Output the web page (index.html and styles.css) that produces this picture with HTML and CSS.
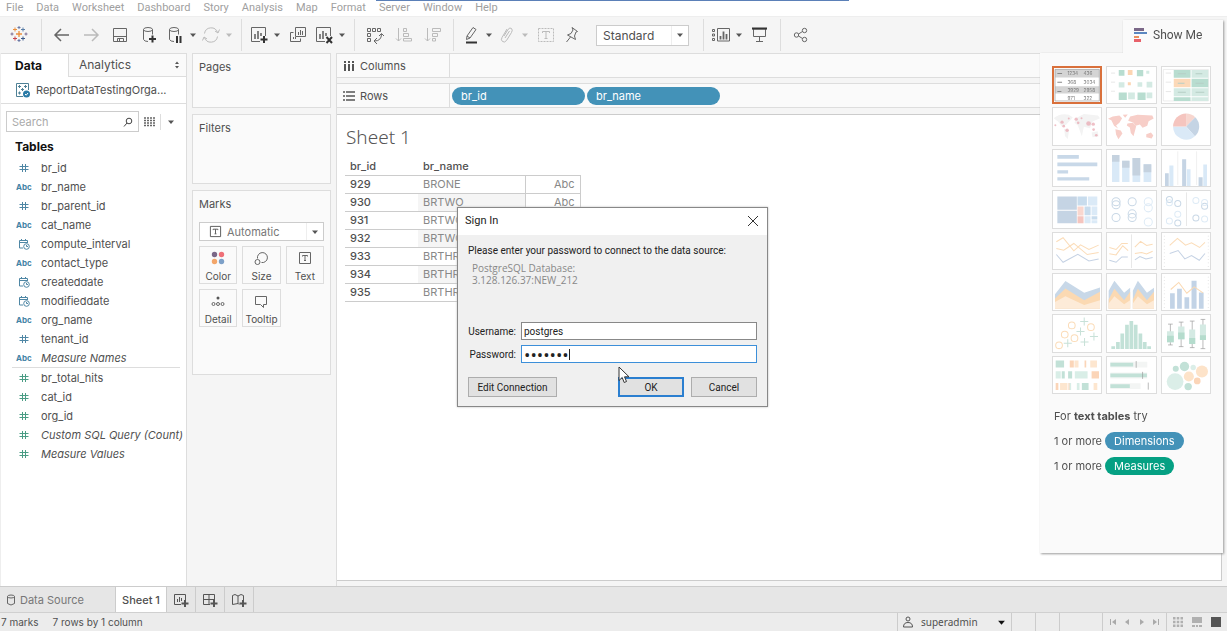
FILE: index.html
```
<!DOCTYPE html>
<html lang="en">

<head>
    <meta charset="utf-8">
    <title>Tableau - Sheet 1</title>
    <link rel="stylesheet" href="styles.css">
</head>

<body>
    <!-- shared icons -->
    <svg class="sprite" aria-hidden="true">
        <symbol id="hash" viewBox="0 0 12 12"><path d="M4.5 2v8M7.5 2v8M1.5 4.5h9M1.5 7.5h9" fill="none" stroke="currentColor" /></symbol>
        <symbol id="date" viewBox="0 0 12 12"><path d="M5 10H1.500V2.500h8V5M1.500 4.500h8M3.500 1v1.500M7.500 1v1.500M8.500 7v1.500h1.500" fill="none" stroke="currentColor" /><circle cx="8.500" cy="8.500" r="2.800" fill="none" stroke="currentColor" /></symbol>
        <symbol id="caret" viewBox="0 0 8 8"><path d="M1 2.500h6L4 6z" fill="currentColor" /></symbol>
        <symbol id="textmark" viewBox="0 0 14 14"><path d="M1.500 1.500h11v11h-11zM4.500 5.500v-1h5v1M7 4.500v5M6 9.500h2" fill="none" stroke="currentColor" /></symbol>
    </svg>

    <div class="app">
        <div class="capture-bar"></div>
        <nav class="menu">
            <a href="#">File</a>
            <a href="#">Data</a>
            <a href="#">Worksheet</a>
            <a href="#">Dashboard</a>
            <a href="#">Story</a>
            <a href="#">Analysis</a>
            <a href="#">Map</a>
            <a href="#">Format</a>
            <a href="#">Server</a>
            <a href="#">Window</a>
            <a href="#">Help</a>
        </nav>

        <div class="toolbar">
            <div class="logo">
                <svg viewBox="0 0 18 18" width="18" height="18" fill="none">
                    <path d="M9 6v6M6 9h6" stroke="#eb8f3c" stroke-width="1.300" />
                    <path d="M5 2.500v4M3 4.500h4" stroke="#eb8f3c" />
                    <path d="M13 2.500v4M11 4.500h4" stroke="#5b7fa8" />
                    <path d="M5 11.500v4M3 13.500h4" stroke="#c8434d" />
                    <path d="M13 11.500v4M11 13.500h4" stroke="#3c5a8a" />
                    <path d="M9 1v3M7.500 2.500h3M9 14v3M7.500 15.500h3" stroke="#6b79a5" />
                    <path d="M2 7.500v3M.5 9h3M16 7.500v3M14.500 9h3" stroke="#7c6d93" />
                </svg>
            </div>
            <div class="tools">
                <button class="tool" aria-label="Back"><svg viewBox="0 0 20 20"><path d="M17 10H3M9 4l-6 6 6 6" stroke-width="1.500" /></svg></button>
                <button class="tool off" aria-label="Forward"><svg viewBox="0 0 20 20"><path d="M3 10h14M11 4l6 6-6 6" stroke-width="1.500" /></svg></button>
                <button class="tool" aria-label="Save"><svg viewBox="0 0 20 20"><path d="M3.500 3.500h13v13h-13zM3.500 11.500h13M7.500 16.500v-3h6v3M9.500 14v2" /></svg></button>
                <button class="tool" aria-label="New data source"><svg viewBox="0 0 20 20"><ellipse cx="9" cy="4.500" rx="4.500" ry="2" /><path d="M4.500 4.500v10q1 2 4.500 2M13.500 4.500v5" /><path d="M13.500 10.500v7M10 14h7" class="heavy" /></svg></button>
                <div class="split">
                    <button class="tool" aria-label="Pause updates"><svg viewBox="0 0 20 20"><ellipse cx="9" cy="4.500" rx="4.500" ry="2" /><path d="M4.500 4.500v10q1 2 4.500 2M13.500 4.500v5" /><path d="M12 11v7M15.500 11v7" class="heavy" /></svg></button>
                    <button class="drop" aria-label="Pause options"><svg><use href="#caret" /></svg></button>
                </div>
                <div class="split off">
                    <button class="tool" aria-label="Refresh"><svg viewBox="0 0 20 20"><path d="M3.500 8.500a6.700 6.700 0 0 1 13-1M16.500 11.500a6.700 6.700 0 0 1-13 1M14 6l3 2 1.500-3.500M6 14l-3-2-1.500 3.500" /></svg></button>
                    <button class="drop" aria-label="Refresh options"><svg><use href="#caret" /></svg></button>
                </div>
            </div>
            <div class="tools">
                <div class="split">
                    <button class="tool" aria-label="New worksheet"><svg viewBox="0 0 20 20"><path d="M11 16.500H2.500v-14h14V11" /><path d="M6 9v5M9 6v8M12 8v3" stroke-width="1.600" /><path d="M15 11v7M11.500 14.500h7" class="heavy" /></svg></button>
                    <button class="drop" aria-label="New options"><svg><use href="#caret" /></svg></button>
                </div>
                <button class="tool" aria-label="Duplicate"><svg viewBox="0 0 20 20"><path d="M7.500 2.500h10v9h-10zM5.500 7.500h-3v9h10v-3M10.500 7v3M12.500 5v5M14.500 6v4M5.500 12v2M7.500 12v2" /></svg></button>
                <div class="split">
                    <button class="tool" aria-label="Clear sheet"><svg viewBox="0 0 20 20"><path d="M11 16.500H2.500v-14h14V11" /><path d="M6 9v5M9 6v8M12 8v3" stroke-width="1.600" /><path d="M12.500 12l5.500 6M18 12l-5.500 6" class="heavy" /></svg></button>
                    <button class="drop" aria-label="Clear options"><svg><use href="#caret" /></svg></button>
                </div>
            </div>
            <div class="tools">
                <button class="tool" aria-label="Swap rows and columns"><svg viewBox="0 0 20 20"><path d="M2.500 3.500h3v3h-3zM7.500 3.500h3v3h-3zM12.500 3.500h3v3h-3zM2.500 8.500h3v3h-3zM2.500 13.500h3v3h-3zM16.500 9q0 7-7 7M14 11l2.500-2.500L19 11M12 13l-3 3 3 3" /></svg></button>
                <button class="tool off" aria-label="Sort ascending"><svg viewBox="0 0 20 20"><path d="M4.500 3v13M2 13.500L4.500 16 7 13.500M9.500 3.500h3v3h-3zM9.500 8.500h5v3h-5zM9.500 13.500h8v2.500h-8z" /></svg></button>
                <button class="tool off" aria-label="Sort descending"><svg viewBox="0 0 20 20"><path d="M4.500 3v13M2 13.500L4.500 16 7 13.500M9.500 3.500h8v3h-8zM9.500 8.500h5v3h-5zM9.500 13.500h3v2.500h-3z" /></svg></button>
            </div>
            <div class="tools">
                <div class="split">
                    <button class="tool" aria-label="Highlight"><svg viewBox="0 0 20 20"><path d="M6 11l6-8.500 3 2L9 13l-3.500 1.500zM6 11l3 2" /><path d="M5 17.500h11" class="heavy" /></svg></button>
                    <button class="drop" aria-label="Highlight options"><svg><use href="#caret" /></svg></button>
                </div>
                <div class="split off">
                    <button class="tool" aria-label="Group members"><svg viewBox="0 0 20 20"><path d="M7 11l4-6.500q2-2.500 3.500-1t0 4l-5 8q-2 2.500-4 1t-.5-4l5-8.500M8 13l4.500-7" /></svg></button>
                    <button class="drop" aria-label="Group options"><svg><use href="#caret" /></svg></button>
                </div>
                <button class="tool off" aria-label="Show mark labels"><svg viewBox="0 0 20 20"><path d="M2.500 3.500h15v13h-15z" stroke-dasharray="2 1" /><path d="M6.500 8V6.500h7V8M10 6.500v7M8.500 13.500h3" /></svg></button>
                <button class="tool pin" aria-label="Fix axes"><svg viewBox="0 0 20 20"><path d="M10 2.500l5.500 4-1.500.5-1.500 4 1 3.500-8-4.500 3.500-1.500 2-3.500zM8.500 12L4.500 17" /></svg></button>
                <label class="picker fit">
                    <select aria-label="Fit">
                        <option>Standard</option>
                    </select>
                    <svg><use href="#caret" /></svg>
                </label>
            </div>
            <div class="tools">
                <div class="split">
                    <button class="tool" aria-label="Show cards"><svg viewBox="0 0 20 20"><path d="M1.500 4.500h2v2h-2zM1.500 9h2v2h-2zM1.500 13.500h2v2h-2zM6.500 3.500h12v12.500h-12z" /><path d="M9.500 11v3.500M12.500 6.500v8M15.500 9v5.500" stroke-width="1.800" /></svg></button>
                    <button class="drop" aria-label="Card options"><svg><use href="#caret" /></svg></button>
                </div>
                <button class="tool" aria-label="Presentation mode"><svg viewBox="0 0 20 20"><path d="M2.500 4h14M3.500 4v7.500h12V4M9.500 11.500v5M6 16.500h7" /><path d="M2 3.500h15" class="heavy" /></svg></button>
            </div>
            <div class="tools">
                <button class="tool" aria-label="Share"><svg viewBox="0 0 20 20"><circle cx="5.500" cy="10" r="2.200" /><circle cx="13.500" cy="5.500" r="2.200" /><circle cx="13.500" cy="14.500" r="2.200" /><path d="M7.500 9l4-2.500M7.500 11l4 2.500" /></svg></button>
            </div>
        </div>

        <main class="workspace">
            <aside class="data-pane">
                <div class="pane-tabs">
                    <button class="pane-tab active">Data</button>
                    <button class="pane-tab">Analytics
                        <svg viewBox="0 0 6 8" width="6" height="8"><path d="M1 3l2-2.500L5 3zM1 5l2 2.500L5 5z" fill="#555" /></svg>
                    </button>
                </div>
                <div class="source">
                    <svg viewBox="0 0 16 16" width="16" height="16" fill="none" stroke="#4f8196">
                        <path d="M8 14.500H1.500v-13h12V8M4.500 3v3M3 4.500h3M10.500 3v3M9 4.500h3M7.500 6v3M6 7.500h3M4.500 9.500v3M3 11h3" />
                        <circle cx="11.500" cy="12" r="3.500" fill="#2a7ba7" stroke="none" />
                        <path d="M10 12l1.200 1.200L13 11" stroke="#fff" />
                    </svg>
                    <span>ReportDataTestingOrga...</span>
                </div>
                <div class="search-row">
                    <label class="search">
                        <input type="text" placeholder="Search" aria-label="Search fields">
                        <svg viewBox="0 0 10 10" width="10" height="10" fill="none" stroke="#444"><circle cx="6" cy="4" r="2.800" /><path d="M4 6L1 9.500" /></svg>
                    </label>
                    <button class="view" aria-label="View data">
                        <svg viewBox="0 0 11 10" width="11" height="10"><path d="M0 1h11M0 3.500h11M0 6h11M0 8.500h11" stroke="#666" stroke-width="1.500" stroke-dasharray="2 1" /></svg>
                    </button>
                    <button class="drop bordered" aria-label="Data pane menu"><svg><use href="#caret" /></svg></button>
                </div>
                <h2>Tables</h2>
                <ul class="fields">
                    <li><svg><use href="#hash" /></svg>br_id</li>
                    <li><b>Abc</b>br_name</li>
                    <li><svg><use href="#hash" /></svg>br_parent_id</li>
                    <li><b>Abc</b>cat_name</li>
                    <li><svg><use href="#date" /></svg>compute_interval</li>
                    <li><b>Abc</b>contact_type</li>
                    <li><svg><use href="#date" /></svg>createddate</li>
                    <li><svg><use href="#date" /></svg>modifieddate</li>
                    <li><b>Abc</b>org_name</li>
                    <li><svg><use href="#hash" /></svg>tenant_id</li>
                    <li><b>Abc</b><i>Measure Names</i></li>
                </ul>
                <ul class="fields measures">
                    <li><svg><use href="#hash" /></svg>br_total_hits</li>
                    <li><svg><use href="#hash" /></svg>cat_id</li>
                    <li><svg><use href="#hash" /></svg>org_id</li>
                    <li><svg><use href="#hash" /></svg><i>Custom SQL Query (Count)</i></li>
                    <li><svg><use href="#hash" /></svg><i>Measure Values</i></li>
                </ul>
            </aside>

            <div class="cards">
                <section class="card pages">
                    <h3>Pages</h3>
                </section>
                <section class="card filters">
                    <h3>Filters</h3>
                </section>
                <section class="card marks">
                    <h3>Marks</h3>
                    <label class="picker mark-type">
                        <svg class="lead"><use href="#textmark" /></svg>
                        <select aria-label="Mark type">
                            <option>Automatic</option>
                        </select>
                        <svg><use href="#caret" /></svg>
                    </label>
                    <div class="mark-grid">
                        <button><svg viewBox="0 0 16 16"><g stroke="none"><circle cx="4.500" cy="4.500" r="2.700" fill="#7b6888" /><circle cx="11.500" cy="4.500" r="2.700" fill="#ef7078" /><circle cx="4.500" cy="11.500" r="2.700" fill="#f3a66a" /><circle cx="11.500" cy="11.500" r="2.700" fill="#7da0c8" /></g></svg>Color</button>
                        <button><svg viewBox="0 0 16 16"><path d="M4.500 8.500a5 5 0 1 1 4 4" /><circle cx="4.500" cy="12" r="2.500" /></svg>Size</button>
                        <button><svg viewBox="0 0 16 16"><path d="M2.500 2.500h11v11h-11zM5.500 6.500v-1h5v1M8 5.500v5M7 10.500h2" /></svg>Text</button>
                        <button><svg viewBox="0 0 16 16"><circle cx="8" cy="5" r="1.500" fill="#555" stroke="none" /><circle cx="3.500" cy="11" r="1.500" /><circle cx="8" cy="11" r="1.500" /><circle cx="12.500" cy="11" r="1.500" /></svg>Detail</button>
                        <button><svg viewBox="0 0 16 16"><path d="M2.500 3.500h11v8h-3v3l-3-3h-5z" /></svg>Tooltip</button>
                    </div>
                </section>
            </div>

            <div class="sheet-area">
                <div class="shelf">
                    <h3><svg viewBox="0 0 12 12"><path d="M2 1v2M2 4v7M6 1v2M6 4v7M10 1v2M10 4v7" stroke="#555" stroke-width="2" /></svg>Columns</h3>
                </div>
                <div class="shelf rows">
                    <h3><svg viewBox="0 0 12 12"><path d="M0 2h2M3 2h9M0 6h2M3 6h9M0 10h2M3 10h9" stroke="#555" stroke-width="1.600" /></svg>Rows</h3>
                    <button class="pill">br_id</button>
                    <button class="pill">br_name</button>
                </div>
                <section class="canvas">
                    <h1>Sheet 1</h1>
                    <table>
                        <thead>
                            <tr><th>br_id</th><th>br_name</th><th></th></tr>
                        </thead>
                        <tbody>
                            <tr><th>929</th><td>BRONE</td><td>Abc</td></tr>
                            <tr><th>930</th><td>BRTWO</td><td>Abc</td></tr>
                            <tr><th>931</th><td>BRTWO</td><td></td></tr>
                            <tr><th>932</th><td>BRTWO</td><td></td></tr>
                            <tr><th>933</th><td>BRTHR</td><td></td></tr>
                            <tr><th>934</th><td>BRTHR</td><td></td></tr>
                            <tr><th>935</th><td>BRTHR</td><td></td></tr>
                        </tbody>
                    </table>
                </section>
            </div>
        </main>

        <div class="sheet-tabs">
            <button class="sheet-tab source-tab">
                <svg viewBox="0 0 10 12" width="10" height="12" fill="none" stroke="#666"><ellipse cx="5" cy="2.500" rx="3.500" ry="1.500" /><path d="M1.500 2.500v7q3.500 3 7 0v-7" /></svg>
                Data Source
            </button>
            <button class="sheet-tab current">Sheet 1</button>
            <button class="sheet-tab add" aria-label="New worksheet tab"><svg viewBox="0 0 16 16"><path d="M8 12.500H1.500v-10h11V8M4.500 7v3M6.500 5v5M8.500 6v3" /><path d="M12 8v7M8.500 11.500h7" stroke-width="2" /></svg></button>
            <button class="sheet-tab add" aria-label="New dashboard"><svg viewBox="0 0 16 16"><path d="M8 12.500H1.500v-10h11V8M7 2.500v10M1.500 7.500h11" /><path d="M12 8v7M8.500 11.500h7" stroke-width="2" /></svg></button>
            <button class="sheet-tab add" aria-label="New story"><svg viewBox="0 0 16 16"><path d="M8 12.500l-1-1-5.500 1v-9L4 2.500l3 1.500 3-1.500 2.500 1V8M7 4v8" /><path d="M12 8v7M8.500 11.500h7" stroke-width="2" /></svg></button>
        </div>

        <footer class="status">
            <span>7 marks</span>
            <span class="summary">7 rows by 1 column</span>
            <button class="user">
                <svg viewBox="0 0 12 12" width="12" height="12" fill="none" stroke="#555"><circle cx="6" cy="3" r="2" /><path d="M1.500 11q0-4.500 4.500-4.500T10.500 11z" /></svg>
                <span>superadmin</span>
                <svg class="arrow"><use href="#caret" /></svg>
            </button>
            <div class="slot"></div>
            <div class="slot"></div>
            <div class="slot wide"></div>
            <div class="pager">
                <button aria-label="First"><svg viewBox="0 0 8 8"><path d="M1 1h1v6H1zM7 1v6L3 4z" /></svg></button>
                <button aria-label="Previous"><svg viewBox="0 0 8 8"><path d="M6 1v6L2 4z" /></svg></button>
                <button aria-label="Next"><svg viewBox="0 0 8 8"><path d="M2 1v6l4-3z" /></svg></button>
                <button aria-label="Last"><svg viewBox="0 0 8 8"><path d="M6 1h1v6H6zM1 1v6l4-3z" /></svg></button>
            </div>
            <div class="views">
                <button aria-label="Sheet sorter"><svg viewBox="0 0 10 10"><path d="M0 0h2.500v2.500H0zM3.750 0h2.500v2.500h-2.500zM7.500 0H10v2.500H7.500zM0 3.750h2.500v2.500H0zM3.750 3.750h2.500v2.500h-2.500zM7.500 3.750H10v2.500H7.500zM0 7.500h2.500V10H0zM3.750 7.500h2.500V10h-2.500zM7.500 7.500H10V10H7.500z" /></svg></button>
                <button aria-label="Filmstrip"><svg viewBox="0 0 10 10"><path d="M0 0h10v6H0zM0 8h3v2H0zM4 8h2v2H4zM7 8h3v2H7z" /></svg></button>
                <button class="on" aria-label="Tabs"><svg viewBox="0 0 10 10"><path d="M0 0h10v10H0z" /></svg></button>
            </div>
        </footer>

        <!-- chart picker, floats over the canvas -->
        <aside class="show-me">
            <button class="show-tab">
                <svg viewBox="0 0 13 14" width="13" height="14"><path d="M0 0h10v3H0z" fill="#7b6888" /><path d="M0 4h13v2H0z" fill="#5b87c0" /><path d="M0 8h5v2H0z" fill="#eb8f5c" /><path d="M0 11h7v3H0z" fill="#e8616a" /></svg>
                Show Me
            </button>
            <div class="show-body">
                <div class="charts">
                    <button class="chosen" aria-label="Text table"><svg viewBox="3 3 144 106"><path d="M9 9h132v24H9zM9 59h132v22H9z" fill="#d4d4d4" /><path d="M9 9h132v94H9z" fill="none" stroke="#999" stroke-width="2" /><path d="M16 21h14M16 47h14M16 75h12" stroke="#888" stroke-width="3" /><g class="tiny"><text x="46" y="26">1234</text><text x="94" y="26">436</text><text x="46" y="52">368</text><text x="94" y="52">3034</text><text x="46" y="77">3929</text><text x="94" y="77">2958</text><text x="46" y="99">971</text><text x="94" y="99">322</text></g></svg></button>
                    <button aria-label="Heat map"><svg viewBox="3 3 144 106"><path d="M15 20h12M15 47h12M15 74h12" stroke="#ddd" stroke-width="2" /><path d="M38 11h17v17H38zM92 11h19v18H92zM38 78h24v22H38zM94 78h24v22H94z" fill="#b8ddd0" /><path d="M120 13h9v9h-9zM38 47h17v16H38zM94 47h14v14H94zM121 46h17v17h-17zM66 78h20v20H66zM121 78h17v17h-17z" fill="#d4eae3" /><path d="M65 11h14v15H65zM65 47h9v9h-9z" fill="#fcd5b2" /></svg></button>
                    <button aria-label="Highlight table"><svg viewBox="3 3 144 106"><path d="M7 9h134v94H7z" fill="none" stroke="#e3e3e3" stroke-width="2" /><path d="M14 20h16M14 47h16M14 75h16" stroke="#ddd" stroke-width="2" /><path d="M38 11h50v23H38zM91 37h50v25H91zM38 92h50v11H38z" fill="#b8ddd0" /><path d="M91 11h50v23H91zM38 65h50v24H38zM91 65h50v24H91zM91 92h50v11H91z" fill="#d4eae3" /><path d="M38 37h50v25H38z" fill="#fcd9b8" /><path d="M50 22h24M103 22h20M50 50h20M103 50h24M50 77h24M103 77h26" stroke="#b5cec5" stroke-width="3" /></svg></button>

                    <button aria-label="Symbol map"><svg viewBox="3 3 144 106"><path d="M5 32q20-16 45-10l12 8-20 22-12 6-12-16zM36 64l15 4-4 26-8-8zM75 30l20-10 42 4 6 8-22 10-8 20-18-4-6 28-12-32-10-8zM118 75l18-4 3 16-18 2z" fill="#f3f3f3" /><g fill="#e9a6b0" opacity=".7"><circle cx="10" cy="53" r="3" /><circle cx="30" cy="44" r="5" /><circle cx="35" cy="56" r="4" /><circle cx="45" cy="68" r="5" /><circle cx="50" cy="33" r="3" /><circle cx="72" cy="35" r="5" /><circle cx="78" cy="46" r="4" /><circle cx="88" cy="32" r="3" /><circle cx="109" cy="48" r="7" /><circle cx="123" cy="50" r="5" /><circle cx="124" cy="66" r="4" /><circle cx="132" cy="83" r="4" /></g></svg></button>
                    <button aria-label="Filled map"><svg viewBox="3 3 144 106"><path d="M6 34l14-7 20-3 8 8-8 14-10 8 6 9-12-8-8-17zM28 65l16 4 5 9-12 17-7-14zM50 22l15-1-8 10zM64 48l16-2 10 10-8 30-8-10-3-16-9-6zM66 40l6-13 22-5 44 2 4 9-15 8-4 14-14 6-8-10-12 4-8-10zM120 80l14-5 7 9-5 9-16-4z" fill="#f7cec8" /></svg></button>
                    <button aria-label="Pie chart"><svg viewBox="3 3 144 106"><path d="M75 57V18a39 39 0 0 1 27 11z" fill="#f7d6cf" /><path d="M75 57l27-28a39 39 0 0 1-1 57z" fill="#c5d4e4" /><path d="M75 57l26 29a39 39 0 0 1-65-29z" fill="#dae9f7" /><path d="M75 57H36a39 39 0 0 1 39-39z" fill="#f5c5bf" /></svg></button>

                    <button aria-label="Horizontal bars"><svg viewBox="3 3 144 106"><path d="M16 17h64v11H16zM16 39h119v11H16zM16 62h32v10H16zM16 83h95v10H16z" fill="#c8d8e8" /></svg></button>
                    <button aria-label="Stacked bars"><svg viewBox="3 3 144 106"><path d="M18 17h22v80H18zM48 34h22v63H48zM79 26h23v71H79zM112 44h23v53h-23z" fill="#d9e9f7" /><path d="M18 17h22v20H18zM48 34h22v21H48zM79 26h23v52H79zM112 44h23v24h-23z" fill="#c5d2df" /></svg></button>
                    <button aria-label="Side-by-side bars"><svg viewBox="3 3 144 106"><path d="M50 6v100M106 6v100" stroke="#e8e8e8" stroke-width="2" /><path d="M12 71h11v38H12zM63 29h12v80H63zM112 83h12v26h-12z" fill="#c5d4e4" /><path d="M25 48h12v61H25zM77 59h11v50H77zM126 45h11v64h-11z" fill="#d9e9f7" /></svg></button>

                    <button aria-label="Treemap"><svg viewBox="3 3 144 106"><path d="M16 18h58v40H16zM16 61h58v37H16z" fill="#c5d4e4" /><path d="M76 18h28v27H76zM97 48h18v26H97zM118 77h17v10h-17z" fill="#c8dced" /><path d="M107 18h28v27h-28zM118 48h17v26h-17zM97 77h18v21H97zM118 89h17v9h-17z" fill="#dbeaf7" /><path d="M76 48h18v27H76z" fill="#f9d7cf" /><path d="M76 77h18v21H76z" fill="#f5c5bf" /></svg></button>
                    <button aria-label="Circle views"><svg viewBox="3 3 144 106" fill="none" stroke="#c9d8e6" stroke-width="3"><circle cx="30" cy="34" r="12" /><circle cx="30" cy="43" r="12" /><circle cx="30" cy="81" r="12" /><circle cx="78" cy="34" r="12" /><circle cx="78" cy="70" r="12" /><circle cx="78" cy="81" r="12" /><g stroke="#deebf6"><circle cx="126" cy="34" r="12" /><circle cx="126" cy="52" r="12" /><circle cx="126" cy="94" r="12" /></g></svg></button>
                    <button aria-label="Side-by-side circles"><svg viewBox="3 3 144 106" fill="none" stroke="#c9d8e6" stroke-width="3"><path d="M76 6v100" stroke="#e8e8e8" /><circle cx="25" cy="27" r="9" /><circle cx="50" cy="39" r="9" /><circle cx="50" cy="97" r="9" /><circle cx="130" cy="47" r="9" /><circle cx="104" cy="82" r="9" /><g stroke="#deebf6"><circle cx="25" cy="37" r="9" /><circle cx="25" cy="91" r="9" /><circle cx="50" cy="71" r="9" /><circle cx="104" cy="30" r="9" /><circle cx="130" cy="36" r="9" /><circle cx="130" cy="85" r="9" /></g></svg></button>

                    <button aria-label="Lines continuous"><svg viewBox="3 3 144 106" fill="none" stroke="#fbdcb8" stroke-width="3"><path d="M13 28l20-12 32 39 20-18 25 14 29-13M13 48l22 5 30-20 40 33 34-6" /><path d="M13 66l20 23 44-24 33 20 29-6" stroke="#c5d2e4" /></svg></button>
                    <button aria-label="Lines discrete"><svg viewBox="3 3 144 106" fill="none" stroke="#fbdcb8" stroke-width="3"><path d="M76 6v100" stroke="#e8e8e8" /><path d="M10 45l20 6 17-18h18M10 64l20 3 20-27 16 14M86 44l17-17 18 12 18-4M86 63l20-3 15 4 18-8" /><path d="M10 83l20 6 17-16h18M86 82l15-10 18 7 20-4" stroke="#c5d2e4" /></svg></button>
                    <button aria-label="Dual lines"><svg viewBox="3 3 144 106" fill="none" stroke="#fbdcb8" stroke-width="3"><path d="M10 10v96M141 10v96" stroke="#ddd" stroke-dasharray="2 8" /><path d="M26 39l23-21 24 20 18-7 24 14 16-15" /><path d="M26 63l25-9 20 25 20-10 23 14 17-20" stroke="#c5d2e4" /></svg></button>

                    <button aria-label="Area continuous"><svg viewBox="3 3 144 106"><path d="M9 62l31-39 56 35 47-16v63H9z" fill="#c8d8e8" /><path d="M9 75l31-30 56 35 47-25v50H9z" fill="#fbd9b2" /><path d="M9 85l31-17 56 26 47-14v25H9z" fill="#fdebd8" /></svg></button>
                    <button aria-label="Area discrete"><svg viewBox="3 3 144 106"><path d="M8 52l17-30 29 36 18-15v62H8zM80 52l15-30 27 36 21-15v62H80z" fill="#c8d8e8" /><path d="M8 78l17-32 29 34 18-25v50H8zM80 78l15-32 27 34 21-25v50H80z" fill="#fbd9b2" /><path d="M8 90l17-22 29 24 18-12v25H8zM80 90l15-22 27 24 21-12v25H80z" fill="#fdebd8" /></svg></button>
                    <button aria-label="Dual combination"><svg viewBox="3 3 144 106"><path d="M10 10v96M141 10v96" stroke="#ddd" stroke-width="3" stroke-dasharray="2 8" /><path d="M27 59h14v46H27zM48 46h14v59H48zM70 71h14v34H70zM91 22h15v83H91zM113 57h14v48h-14z" fill="#c2d3e6" /><path d="M29 48l24-21 24 32 22-19 26 18" fill="none" stroke="#fbd9b2" stroke-width="3" /></svg></button>

                    <button aria-label="Scatter plot"><svg viewBox="3 3 144 106" fill="none" stroke="#fbdcb8" stroke-width="3"><circle cx="59" cy="33" r="10" /><circle cx="116" cy="38" r="10" /><circle cx="38" cy="60" r="10" /><circle cx="67" cy="71" r="10" /><circle cx="21" cy="92" r="10" /><path d="M84 21h24M96 9v24M73 51h24M85 39v24M35 86h24M47 74v24M85 82h24M97 70v24M113 66h24M125 54v24" stroke="#c8e1d8" /></svg></button>
                    <button aria-label="Histogram"><svg viewBox="3 3 144 106"><path d="M16 95h11v8H16zM30 82h11v21H30zM43 57h11v46H43zM57 31h11v72H57zM70 20h11v83H70zM83 31h11v72H83zM97 57h11v46H97zM110 82h11v21h-11zM123 95h11v8h-11z" fill="#c2e1d7" /></svg></button>
                    <button aria-label="Box plot"><svg viewBox="3 3 144 106"><path d="M28 29v62M21 29h14M21 91h14M60 23v73M53 23h14M53 96h14M93 20v79M86 20h14M86 99h14M125 15v87M118 15h14M118 102h14" stroke="#999" stroke-width="2" /><path d="M18 50h20v33H18zM51 36h19v38H51zM84 45h18v43H84zM116 30h18v46h-18z" fill="#d4eae3" /><path d="M18 64h20v19H18zM51 54h19v20H51zM84 70h18v18H84zM116 62h18v14h-18z" fill="#b5dccd" /></svg></button>

                    <button aria-label="Gantt"><svg viewBox="3 3 144 106"><path d="M11 12h25v21H11zM29 44h9v22h-9zM48 44h12v22H48zM89 79h20v21H89z" fill="#c2e1d7" /><path d="M11 44h15v22H11zM68 44h38v22H68zM51 79h6v21h-6zM74 79h8v21h-8z" fill="#d9eee7" /><path d="M53 12h12v21H53zM97 12h5v21h-5zM118 44h22v22h-22zM11 79h8v21h-8zM49 79h3v21h-3z" fill="#fbd5b8" /><path d="M67 12h12v21H67zM114 12h20v21h-20zM24 79h22v21H24zM124 79h11v21h-11z" fill="#fde6cf" /></svg></button>
                    <button aria-label="Bullet graph"><svg viewBox="3 3 144 106"><path d="M13 16h110v17H13zM13 48h110v18H13zM13 80h90v17H13z" fill="#f3f5f4" /><path d="M13 19h68v11H13zM13 51h109v11H13zM13 83h58v11H13z" fill="#c2e1d7" /><path d="M90 14v20M109 46v21M126 78v21" stroke="#999" stroke-width="2" /></svg></button>
                    <button aria-label="Packed bubbles"><svg viewBox="3 3 144 106" fill="#c2e1d7"><circle cx="42" cy="75" r="25" fill="#dbeee8" /><circle cx="70" cy="30" r="14" /><circle cx="44" cy="37" r="9" /><circle cx="81" cy="90" r="11" /><circle cx="96" cy="33" r="8" fill="#dbeee8" /><circle cx="122" cy="45" r="18" fill="#fde3c9" /><circle cx="83" cy="60" r="15" fill="#fde3c9" /><circle cx="108" cy="73" r="10" fill="#fbd5b8" /></svg></button>
                </div>
                <p>For <strong>text tables</strong> try</p>
                <p>1 or more <span class="tag">Dimensions</span></p>
                <p>1 or more <span class="tag green">Measures</span></p>
            </div>
        </aside>

        <form class="dialog" role="dialog" aria-labelledby="dialogTitle">
            <header>
                <h2 id="dialogTitle">Sign In</h2>
                <button type="button" class="close" aria-label="Close"><svg viewBox="0 0 12 12" width="12" height="12"><path d="M1 1l10 10M11 1L1 11" stroke="#333" /></svg></button>
            </header>
            <div class="dialog-body">
                <p>Please enter your password to connect to the data source:</p>
                <p class="server">PostgreSQL Database:<br>3.128.126.37:NEW_212</p>
                <div class="form-row">
                    <label for="username">Username:</label>
                    <input type="text" id="username" value="postgres">
                </div>
                <div class="form-row">
                    <label for="password">Password:</label>
                    <input type="password" id="password" value="1234567">
                </div>
                <div class="actions">
                    <button type="button" class="edit">Edit Connection</button>
                    <button type="submit" class="ok">OK</button>
                    <button type="button">Cancel</button>
                </div>
            </div>
            <svg class="pointer" viewBox="0 0 12 18" width="12" height="18"><path d="M1 1v13.500l3.200-3 2 5 2.300-1-2-4.700H11z" fill="#fff" stroke="#333" /></svg>
        </form>
    </div>
</body>

</html>
```
FILE: styles.css
```
* {
    box-sizing: border-box;
}

body {
    margin: 0;
    font-family: Inter, "Liberation Sans", sans-serif;
    font-size: 11px;
    color: #505050;
    background-color: white;
}

h1, h2, h3, p, ul {
    margin: 0;
    padding: 0;
    font-weight: normal;
}

button, select, input {
    margin: 0;
    padding: 0;
    border: none;
    background: none;
    font: inherit;
    color: inherit;
}

button svg {
    display: block;
}

.sprite {
    display: none;
}

.app {
    position: relative;
    display: flex;
    flex-direction: column;
    min-height: 100vh;
    padding-bottom: 1px;
    overflow: hidden;
}

.capture-bar {
    position: absolute;
    top: 0;
    left: 376px;
    width: 473px;
    height: 1px;
    background-color: #5b80b8;
}

/* menu and toolbar */
.menu {
    display: flex;
    gap: 13px;
    height: 16px;
    padding-left: 6px;
    font-family: Roboto, sans-serif;
    line-height: 15px;
}

.menu a {
    color: #a0a0a0;
    text-decoration: none;
}

.toolbar {
    display: flex;
    align-items: center;
    height: 37px;
    background-color: #f5f5f5;
    border-top: 1px solid #eee;
}

.logo {
    width: 41px;
    padding-left: 10px;
}

.tools {
    display: flex;
    align-items: center;
    height: 32px;
    padding: 0 6px 0 5px;
    border-left: 1px solid #ddd;
}

.tool {
    display: flex;
    justify-content: center;
    width: 29px;
    color: #666;
}

.tool svg {
    width: 20px;
    height: 20px;
    fill: none;
    stroke: currentColor;
}

.tool .heavy {
    stroke: #333;
    stroke-width: 2;
}

.split {
    display: flex;
    align-items: center;
}

.split .tool, .pin {
    width: 24px;
}

.drop {
    width: 12px;
    padding: 0 2px;
    color: #555;
}

.drop svg {
    width: 8px;
    height: 8px;
}

.off, .off button {
    color: #bbb;
}

.picker {
    display: flex;
    align-items: center;
    background-color: white;
    border: 1px solid #ccc;
}

.picker select {
    flex: 1;
    appearance: none;
    outline: none;
}

.picker svg {
    width: 8px;
    height: 8px;
    margin: 0 4px;
    color: #555;
}

.fit {
    width: 93px;
    height: 21px;
    margin: 0 8px 0 12px;
    padding-left: 6px;
    font-size: 12px;
}

.fit select {
    height: 19px;
    border-right: 1px solid #eee;
}

/* workspace */
.workspace {
    display: flex;
    flex: 1;
    background-color: #f5f5f5;
}

.data-pane {
    width: 187px;
    background-color: white;
    border-right: 1px solid #ddd;
    border-left: 1px solid #eee;
}

.pane-tabs {
    display: flex;
    height: 24px;
}

.pane-tab {
    display: flex;
    flex: 1;
    align-items: center;
    justify-content: space-between;
    padding: 0 6px 1px 10px;
    font-size: 12px;
    text-align: left;
    background-color: #fafafa;
    border: solid #ddd;
    border-width: 1px 0 1px 1px;
}

.pane-tab.active {
    flex: 0 0 67px;
    padding-left: 14px;
    font-weight: bold;
    color: #111;
    background-color: white;
    border-width: 1px 0 0;
}

.source {
    display: flex;
    align-items: center;
    gap: 5px;
    height: 27px;
    padding-left: 14px;
    border-bottom: 1px solid #ddd;
}

.search-row {
    display: flex;
    align-items: center;
    padding: 7px 9px 5px 5px;
}

.search {
    display: flex;
    flex: 1;
    align-items: center;
    height: 21px;
    padding: 0 5px;
    border: 1px solid #ccc;
}

.search input {
    flex: 1;
    width: 50px;
    outline: none;
}

.search input::placeholder {
    color: #aaa;
}

.view {
    margin: 0 5px;
}

.drop.bordered {
    width: 17px;
    padding: 4px 0 4px 6px;
    border-left: 1px solid #ddd;
}

.data-pane h2 {
    padding-left: 14px;
    font-size: 12px;
    font-weight: bold;
    line-height: 20px;
    color: #111;
}

.fields {
    margin: 1px 6px 0 11px;
    list-style: none;
}

.fields li {
    display: flex;
    align-items: center;
    height: 19px;
    padding-left: 3px;
    white-space: nowrap;
}

.fields svg {
    flex: none;
    width: 12px;
    height: 12px;
    margin: 0 11px 0 3px;
    color: #4f87a5;
}

.fields b {
    width: 25px;
    margin-left: 1px;
    font-size: 8px;
    color: #4383a5;
}

.measures {
    margin-top: 0;
    border-top: 1px solid #ddd;
}

.measures svg {
    color: #4b9d85;
}

/* cards */
.cards {
    display: flex;
    flex-direction: column;
    gap: 6px;
    width: 150px;
    padding: 0 5px;
    border-right: 1px solid #ddd;
}

.card {
    padding: 6px;
    background-color: #fafafa;
    border: 1px solid #ddd;
}

.card h3 {
    font-size: 11px;
    line-height: 14px;
}

.pages {
    height: 55px;
}

.filters {
    height: 70px;
}

.marks {
    height: 185px;
}

.mark-type {
    height: 19px;
    margin-top: 11px;
}

.mark-type select {
    height: 17px;
    border-right: 1px solid #eee;
    color: #777;
}

.mark-type .lead {
    width: 13px;
    height: 13px;
    margin: 0 5px 0 9px;
}

.mark-grid {
    display: grid;
    grid-template-columns: repeat(3, 1fr);
    gap: 5px;
    margin-top: 5px;
}

.mark-grid button {
    display: flex;
    flex-direction: column;
    align-items: center;
    justify-content: center;
    gap: 3px;
    min-width: 0;
    height: 38px;
    padding-top: 2px;
    font-size: 10px;
    line-height: 14px;
    border: 1px solid #ddd;
}

.mark-grid svg {
    width: 16px;
    height: 16px;
    fill: none;
    stroke: #666;
}

/* shelves and sheet */
.sheet-area {
    display: flex;
    flex: 1;
    flex-direction: column;
    padding: 0 5px 5px 0;
}

.shelf {
    display: flex;
    align-items: center;
    gap: 2px;
    height: 25px;
    margin-bottom: 5px;
    background-color: #fafafa;
    border: 1px solid #ddd;
    border-left: none;
}

.shelf h3 {
    display: flex;
    align-items: center;
    gap: 5px;
    width: 113px;
    height: 23px;
    padding-left: 6px;
    font-size: 11px;
    border-right: 1px solid #ddd;
}

.shelf svg {
    width: 12px;
    height: 12px;
}

.pill {
    width: 133px;
    height: 18px;
    padding-left: 9px;
    text-align: left;
    color: white;
    background-color: #4392b8;
    border-radius: 9px;
}

.canvas {
    flex: 1;
    margin-top: 1px;
    padding: 10px 8px;
    background-color: white;
    border: 1px solid #ccc;
    border-left: none;
}

.canvas h1 {
    padding-left: 1px;
    font-family: "Noto Sans", sans-serif;
    font-size: 19px;
    font-weight: 300;
    line-height: 24px;
    color: #555;
}

.canvas table {
    width: 235px;
    margin-top: 8px;
    table-layout: fixed;
    border-collapse: collapse;
}

.canvas tr {
    height: 18px;
    border-bottom: 1px solid #ccc;
}

.canvas th, .canvas td {
    padding: 0 5px;
    line-height: 16px;
    text-align: left;
}

.canvas th {
    width: 73px;
    font-weight: 500;
}

.canvas thead th {
    padding-top: 1px;
}

.canvas thead th:nth-child(2) {
    width: 107px;
}

.canvas thead th:nth-child(3) {
    width: 55px;
}

.canvas td {
    color: #888;
}

.canvas tr:nth-child(even) td:nth-child(2) {
    background-color: #f5f5f5;
}

.canvas td:last-child {
    text-align: right;
    border: 1px solid #ccc;
}

/* bottom bars */
.sheet-tabs {
    display: flex;
    height: 27px;
    background-color: #e6e6e6;
    border-top: 1px solid #ccc;
    border-bottom: 1px solid #d0d0d0;
}

.sheet-tab {
    width: 29px;
    border-right: 1px solid #ccc;
}

.source-tab {
    display: flex;
    align-items: center;
    gap: 4px;
    width: 116px;
    padding-left: 6px;
    color: #777;
}

.current {
    width: 51px;
    font-weight: 500;
    background-color: white;
}

.add svg {
    width: 16px;
    height: 16px;
    margin: 0 auto;
    fill: none;
    stroke: #555;
}

.status {
    display: flex;
    align-items: center;
    height: 18px;
    padding-left: 1px;
    font-size: 10px;
    background-color: #ececec;
}

.summary {
    flex: 1;
    margin-left: 14px;
}

.user {
    display: flex;
    align-items: center;
    gap: 7px;
    width: 114px;
    height: 18px;
    padding: 0 5px 0 4px;
    font-family: "Noto Sans", sans-serif;
    font-size: 10px;
    border-left: 1px solid #ccc;
}

.arrow {
    width: 9px;
    height: 9px;
    margin-left: auto;
    color: #111;
}

.slot {
    width: 24px;
    height: 18px;
    border-left: 1px solid #ccc;
}

.slot.wide {
    width: 43px;
}

.pager, .views {
    display: flex;
    align-items: center;
    justify-content: space-between;
    width: 64px;
    height: 18px;
    padding: 0 6px;
    border-left: 1px solid #ccc;
}

.pager svg {
    width: 8px;
    height: 8px;
    fill: #aaa;
}

.views {
    width: 61px;
}

.views svg {
    width: 10px;
    height: 10px;
    fill: #b0b0b0;
}

.views .on svg {
    fill: #555;
}

/* show me */
.show-me {
    position: absolute;
    top: 20px;
    right: 4px;
    display: flex;
    flex-direction: column;
    width: 183px;
    filter: drop-shadow(1px 1px 1px #999);
}

.show-tab {
    display: flex;
    gap: 6px;
    align-items: center;
    align-self: flex-end;
    width: 100px;
    height: 33px;
    padding: 0 0 4px 11px;
    font-family: Roboto, sans-serif;
    font-size: 12px;
    background-color: #fafafa;
}

.show-body {
    height: 500px;
    padding: 13px 12px;
    background-color: #fafafa;
}

.charts {
    display: grid;
    grid-template-columns: repeat(3, 1fr);
    grid-template-rows: repeat(8, 1fr);
    gap: 3px 4px;
    height: 328px;
    margin-bottom: 10px;
}

.charts button {
    min-width: 0;
    min-height: 0;
    background-color: white;
    border: 1px solid #ddd;
}

.charts svg {
    width: 100%;
    height: 100%;
}

.charts .chosen {
    border-color: #d9703b;
    outline: 1px solid #d9703b;
    outline-offset: -2px;
}

.tiny {
    font-size: 14px;
    fill: #777;
}

.show-body p {
    height: 25px;
    padding-left: 2px;
    line-height: 25px;
}

.tag {
    display: inline-block;
    height: 18px;
    padding: 0 9px;
    line-height: 18px;
    color: white;
    background-color: #4392b8;
    border-radius: 9px;
}

.tag.green {
    background-color: #05a083;
}

/* sign in dialog */
.dialog {
    position: absolute;
    top: 207px;
    left: 457px;
    width: 311px;
    font-family: Roboto, sans-serif;
    font-size: 10px;
    color: #222;
    background-color: #f0f0f0;
    border: 1px solid #888;
    box-shadow: 0 0 2px #bbb;
}

.dialog header {
    display: flex;
    align-items: center;
    justify-content: space-between;
    height: 27px;
    padding: 0 8px 2px 7px;
    background-color: white;
}

.dialog h2 {
    font-size: 11px;
}

.dialog-body {
    padding: 9px 10px;
}

.dialog p {
    line-height: 14px;
}

.dialog .server {
    margin: 4px 0 36px 4px;
    font-family: "Open Sans", sans-serif;
    line-height: 12px;
    color: #888;
}

.form-row {
    display: flex;
    align-items: center;
    gap: 5px;
    margin-bottom: 5px;
}

.form-row label {
    width: 48px;
    text-align: right;
}

.form-row input {
    flex: 1;
    height: 18px;
    padding: 0 2px;
    background-color: white;
    border: 1px solid #888;
}

.form-row input[type="password"] {
    font-family: "Open Sans", sans-serif;
    font-size: 17px;
    /* text caret after the last dot */
    background: linear-gradient(#222, #222) 47px 3px / 1px 11px no-repeat white;
    border-color: #3c8fd9;
    outline: none;
}

.actions {
    display: flex;
    gap: 7px;
    margin-top: 14px;
}

.actions button {
    width: 66px;
    height: 20px;
    background-color: #e1e1e1;
    border: 1px solid #adadad;
}

.actions .edit {
    width: 89px;
    margin-right: auto;
}

.actions .ok {
    border: 2px solid #2b7fd0;
}

.pointer {
    position: absolute;
    top: 158px;
    left: 160px;
}
```
